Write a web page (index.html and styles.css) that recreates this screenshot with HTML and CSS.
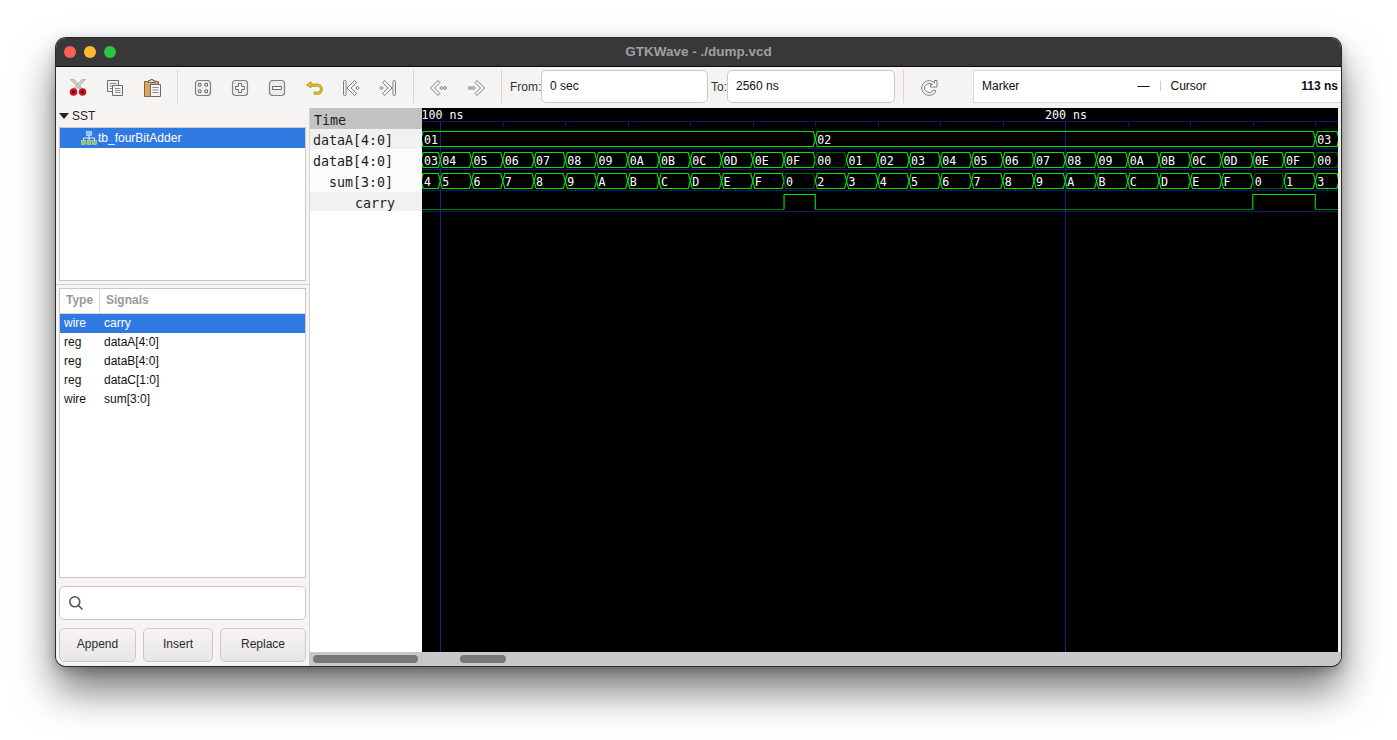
FILE: index.html
```html
<!DOCTYPE html>
<html lang="en">
<head>
<meta charset="utf-8">
<title>GTKWave - ./dump.vcd</title>
<link rel="stylesheet" href="styles.css">
</head>
<body>
<div class="window">
  <header class="titlebar">
    <div class="lights"><i class="light red"></i><i class="light yellow"></i><i class="light green"></i></div>
    <div class="title">GTKWave - ./dump.vcd</div>
  </header>
  <div class="toolbar">
    <button class="tb" aria-label="Cut"><svg viewBox="0 0 20 20" class="icon">
      <path class="blade" d="M2.5 1.5 L13.2 12.5 L15 11.3 L6 1.5 Z"/><path class="blade" d="M17.5 1.5 L6.8 12.5 L5 11.3 L14 1.5 Z"/>
      <circle class="scis" cx="5.5" cy="14" r="2.6"/><circle class="scis" cx="14.5" cy="14" r="2.6"/>
    </svg></button>
    <button class="tb" aria-label="Copy"><svg viewBox="0 0 20 20" class="icon">
      <path class="doc" d="M2.5 2.5 H13.5 V13.5 H2.5 Z"/><path class="docline" d="M4.5 5.5 H11.5 M4.5 8 H11.5 M4.5 10.5 H8"/>
      <path class="doc" d="M7.5 7.5 H17.5 V17.5 H7.5 Z"/><path class="docline" d="M10 10.5 H15.5 M10 12.5 H15.5 M10 14.5 H15.5"/>
    </svg></button>
    <button class="tb" aria-label="Paste"><svg viewBox="0 0 20 20" class="icon">
      <path class="board" d="M2.5 3.5 H16.5 V18.5 H2.5 Z"/><path class="clip" d="M6.5 4.5 V2.5 H8.5 V1.5 H11 V2.5 H13 V4.5 Z"/>
      <path class="doc" d="M8.5 6.5 H18.5 V18.5 H8.5 Z"/><path class="docline" d="M10.5 9.5 H16.5 M10.5 12 H16.5 M10.5 14.5 H16.5"/>
    </svg></button>
    <span class="sep"></span>
    <button class="tb" aria-label="Zoom fit"><svg viewBox="0 0 20 20" class="icon">
      <rect class="key" x="2.5" y="2.5" width="15" height="15" rx="3"/>
      <path class="mark" d="M8 8 H5.5 V5.5 H8 Z M12 8 H14.5 V5.5 H12 Z M8 12 H5.5 V14.5 H8 Z M12 12 H14.5 V14.5 H12 Z"/>
    </svg></button>
    <button class="tb" aria-label="Zoom in"><svg viewBox="0 0 20 20" class="icon">
      <rect class="key" x="2.5" y="2.5" width="15" height="15" rx="3"/>
      <path class="mark" d="M8.5 5.5 H11.5 V8.5 H14.5 V11.5 H11.5 V14.5 H8.5 V11.5 H5.5 V8.5 H8.5 Z"/>
    </svg></button>
    <button class="tb" aria-label="Zoom out"><svg viewBox="0 0 20 20" class="icon">
      <rect class="key" x="2.5" y="2.5" width="15" height="15" rx="3"/>
      <path class="mark" d="M5.5 8.5 H14.5 V11.5 H5.5 Z"/>
    </svg></button>
    <button class="tb" aria-label="Undo"><svg viewBox="0 0 20 20" class="icon">
      <path class="undo" d="M7 3.5 L2.5 7 L7 10 V8.3 H13.5 C15.6 8.3 16.3 10 16.3 11.2 C16.3 13 15 14 13.5 14 H10 V16.3 H13.5 C16.8 16.3 18.4 14 18.4 11.2 C18.4 8.5 16.6 6 13.5 6 H7 Z"/>
    </svg></button>
    <button class="tb" aria-label="Go to start"><svg viewBox="0 0 20 20" class="icon">
      <rect class="key2" x="2.5" y="2.5" width="2.5" height="15" rx="1"/>
      <path class="key2" d="M13.5 2.5 L15.5 4.5 L10 10 L15.5 15.5 L13.5 17.5 L6 10 Z"/>
      <circle class="key2" cx="16.5" cy="10" r="1.4"/>
    </svg></button>
    <button class="tb" aria-label="Go to end"><svg viewBox="0 0 20 20" class="icon">
      <rect class="key2" x="15" y="2.5" width="2.5" height="15" rx="1"/>
      <path class="key2" d="M6.5 2.5 L4.5 4.5 L10 10 L4.5 15.5 L6.5 17.5 L14 10 Z"/>
      <circle class="key2" cx="3.5" cy="10" r="1.4"/>
    </svg></button>
    <span class="sep"></span>
    <button class="tb" aria-label="Page left"><svg viewBox="0 0 20 20" class="icon">
      <path class="key2" d="M9 2.5 L11 4.5 L5.5 10 L11 15.5 L9 17.5 L1.5 10 Z"/>
      <circle class="key2" cx="12.5" cy="10" r="1.4"/><circle class="key2" cx="16" cy="10" r="1.4"/>
    </svg></button>
    <button class="tb" aria-label="Page right"><svg viewBox="0 0 20 20" class="icon">
      <path class="key2" d="M11 2.5 L9 4.5 L14.5 10 L9 15.5 L11 17.5 L18.5 10 Z"/>
      <circle class="key2" cx="7.5" cy="10" r="1.4"/><circle class="key2" cx="4" cy="10" r="1.4"/>
    </svg></button>
    <span class="sep"></span>
    <label class="from-label">From:</label>
    <div class="entry from">0 sec</div>
    <label class="to-label">To:</label>
    <div class="entry">2560 ns</div>
    <span class="sep sep-wide"></span>
    <button class="tb" aria-label="Reload"><svg viewBox="0 0 20 20" class="icon">
      <path class="key2" d="M15.5 5.2 V2.5 H18 V9 H11.5 V6.5 H13.6 C12.6 5.8 11.5 5.5 10.3 5.5 C7.6 5.5 5.5 7.5 5.5 10 C5.5 12.6 7.6 14.5 10.3 14.5 C12.2 14.5 13.8 13.5 14.6 12 L17 13 C15.8 15.6 13.3 17.3 10.3 17.3 C6.2 17.3 2.8 14.1 2.8 10 C2.8 5.9 6.2 2.7 10.3 2.7 C12.3 2.7 14.1 3.6 15.5 5.2 Z"/>
    </svg></button>
    <div class="readout">
      <div class="read-part"><span>Marker</span><b class="plain">&#8212;</b></div>
      <span class="read-sep"></span>
      <div class="read-part"><span>Cursor</span><b>113 ns</b></div>
    </div>
  </div>
  <main class="main">
    <aside class="left">
      <div class="sst-head"><i class="tri"></i>SST</div>
      <div class="box tree">
        <div class="tree-row">
          <svg viewBox="0 0 16 14" class="hier">
            <rect class="hb" x="5.5" y="0.5" width="5" height="4"/>
            <path class="hl" d="M8 4.5 V7 M2.5 9.5 V7 H13.5 V9.5 M8 7 V9.5"/>
            <rect class="hg" x="0.5" y="9.5" width="4" height="4"/><rect class="hg" x="6" y="9.5" width="4" height="4"/><rect class="hg" x="11.5" y="9.5" width="4" height="4"/>
          </svg>
          <span>tb_fourBitAdder</span>
        </div>
      </div>
      <div class="divider"></div>
      <div class="box signals">
        <div class="sig-head"><span class="c-type">Type</span><span class="c-name">Signals</span></div>
        <div class="sig-row on"><span class="c-t">wire</span><span>carry</span></div>
        <div class="sig-row"><span class="c-t">reg</span><span>dataA[4:0]</span></div>
        <div class="sig-row"><span class="c-t">reg</span><span>dataB[4:0]</span></div>
        <div class="sig-row"><span class="c-t">reg</span><span>dataC[1:0]</span></div>
        <div class="sig-row"><span class="c-t">wire</span><span>sum[3:0]</span></div>
      </div>
      <div class="search">
        <svg viewBox="0 0 16 16" class="glass"><circle cx="6.8" cy="6.8" r="5"/><path d="M10.5 10.5 L14.5 14.5"/></svg>
      </div>
      <div class="actions">
        <button class="act a1">Append</button>
        <button class="act a2">Insert</button>
        <button class="act a3">Replace</button>
      </div>
    </aside>
    <section class="right">
      <div class="panes">
        <div class="names">
          <div class="time">Time</div>
          <div class="nm tint">dataA[4:0]</div>
          <div class="nm">dataB[4:0]</div>
          <div class="nm">sum[3:0]</div>
          <div class="nm tint carry">carry</div>
        </div>
        <svg id="wave" class="wave" viewBox="422 108 916 544" width="916" height="544"></svg>
        <div class="strip"></div>
      </div>
      <div class="scrolls">
        <div class="sb sb1"><i class="thumb t1"></i></div>
        <div class="sb sb2"><i class="thumb t2"></i></div>
      </div>
    </section>
  </main>
</div>
<script src="waves.js"></script>
</body>
</html>
```
FILE: styles.css
```css
* { box-sizing: border-box; }
html, body { margin: 0; height: 100%; }
body {
  background: #fff;
  padding: 38px 56px 75px;
  font-family: "Liberation Sans", Arial, sans-serif;
  font-size: 12px;
  color: #1c1c1c;
  overflow: hidden;
}
.window {
  width: 1285px;
  height: 627.5px;
  border-radius: 10px;
  overflow: hidden;
  display: flex;
  flex-direction: column;
  background: #f5f4f2;
  box-shadow: 0 0 0 1px #2a2a2a, 0 24px 42px rgba(0,0,0,.55), 0 4px 12px rgba(0,0,0,.25);
}
.titlebar {
  flex: none;
  height: 29px;
  background: #38383b;
  border-bottom: 1px solid #0c0c0c;
  display: flex;
  align-items: center;
  position: relative;
  padding-left: 8px;
}
.lights { display: flex; gap: 8px; }
.light { width: 12px; height: 12px; border-radius: 50%; display: block; }
.red { background: #fe5f57; }
.yellow { background: #febb2e; }
.green { background: #28c840; }
.title {
  position: absolute;
  left: 0; right: 0; top: 6px;
  text-align: center;
  color: #a0a0a0;
  font-weight: bold;
  font-size: 13.5px;
  line-height: 16px;
}
.toolbar {
  flex: none;
  height: 41px;
  padding: 0 0 2px 3.5px;
  display: flex;
  align-items: center;
  background: #f5f4f2;
}
.tb {
  width: 37px;
  height: 33px;
  padding: 2px 0 0;
  border: 0;
  background: none;
  display: flex;
  align-items: center;
  justify-content: center;
  flex: none;
}
.icon { width: 20px; height: 20px; display: block; }
.sep { flex: none; width: 1px; height: 33px; background: #dbd8d4; margin: 0 6.5px; }
.sep-wide { margin-left: 8px; }
.from-label { margin-left: 1.5px; color: #333; width: 31px; flex: none; }
.to-label { margin-left: 3px; color: #333; width: 16px; flex: none; }
.entry {
  flex: none;
  width: 168px;
  height: 33px;
  background: #fff;
  border: 1px solid #cdc8c2;
  border-radius: 5px;
  padding-left: 8px;
  line-height: 30px;
  color: #111;
}
.from { width: 167px; }
.readout {
  margin-left: 25.5px;
  flex: 1;
  min-width: 0;
  height: 33px;
  background: #fff;
  border: 1px solid #dcd9d5;
  border-right: 0;
  padding: 0 3px 1px 8px;
  display: flex;
  align-items: center;
  gap: 10px;
}
.read-part { flex: 1; display: flex; justify-content: space-between; color: #111; }
.read-part .plain { font-weight: normal; }
.read-sep { width: 1px; height: 10px; background: #ccc; flex: none; }

.blade { fill: #d2d2d2; stroke: #8d8d8d; stroke-width: .6; }
.scis { fill: #3a0508; stroke: #d01020; stroke-width: 2.4; }
.doc { fill: #f6f6f4; stroke: #6b6b6b; stroke-width: 1; }
.docline { fill: none; stroke: #8a8a8a; stroke-width: 1; }
.board { fill: #d8a45f; stroke: #8a6434; stroke-width: 1; }
.clip { fill: #ddd; stroke: #666; stroke-width: 1; }
.key { fill: #ededeb; stroke: #808080; stroke-width: 1.2; }
.mark { fill: #fff; stroke: #6a6a6a; stroke-width: 1; }
.key2 { fill: #f7f7f6; stroke: #7d7d7d; stroke-width: 1; }
.undo { fill: #e6c227; stroke: #a3840e; stroke-width: .7; }

.main { flex: 1; min-height: 0; display: flex; }
.left {
  flex: none;
  width: 253px;
  padding: 0 3px;
  display: flex;
  flex-direction: column;
  background: #f5f4f2;
}
.sst-head { height: 19px; padding-bottom: 4px; display: flex; align-items: center; color: #222; flex: none; }
.tri {
  width: 0; height: 0;
  border-left: 5px solid transparent;
  border-right: 5px solid transparent;
  border-top: 6px solid #222;
  margin-right: 3px;
  margin-top: 1px;
}
.box { background: #fff; border: 1px solid #cdc8c2; flex: none; }
.tree { height: 154px; }
.tree-row {
  height: 20px;
  background: #2f7ae0;
  color: #fff;
  display: flex;
  align-items: center;
  padding-left: 21px;
  gap: 1px;
}
.hier { width: 16px; height: 14px; flex: none; }
.hb { fill: #9cc4f2; stroke: #dcecff; stroke-width: .6; }
.hg { fill: #8cc46a; stroke: #b9e09f; stroke-width: .6; }
.hl { fill: none; stroke: #e6eef7; stroke-width: 1; }
.divider { height: 1px; margin: 3px -3px 3px; background: #d5d1cc; flex: none; }
.signals { height: 290px; }
.sig-head {
  height: 25px;
  display: flex;
  align-items: center;
  border-bottom: 1px solid #dcd9d5;
  color: #9a9a9a;
  font-weight: bold;
  padding-bottom: 2px;
}
.c-type { width: 40px; padding-left: 6px; height: 25px; margin-bottom: -2px; line-height: 22px; border-right: 1px solid #dcd9d5; flex: none; }
.c-name { padding-left: 6px; }
.sig-row { height: 19px; padding-bottom: 2px; display: flex; align-items: center; color: #111; }
.sig-row.on { background: #2f7ae0; color: #fff; }
.c-t { width: 44px; padding-left: 4px; flex: none; }
.search {
  flex: none;
  margin-top: 8px;
  height: 34px;
  background: #fff;
  border: 1px solid #cdc8c2;
  border-radius: 5px;
  display: flex;
  align-items: center;
  padding-left: 8px;
}
.glass { width: 16px; height: 16px; fill: none; stroke: #555; stroke-width: 1.6; }
.actions { flex: none; margin-top: 8px; height: 34px; display: flex; gap: 7px; }
.act {
  height: 34px;
  padding: 0 0 2px;
  background: linear-gradient(#f6f5f3, #e8e6e3);
  border: 1px solid #cdc8c2;
  border-radius: 5px;
  font: 12px "Liberation Sans", Arial, sans-serif;
  color: #2a2a2a;
}
.a1 { width: 77px; }
.a2 { width: 70px; }
.a3 { width: 86px; }

.right { flex: 1; min-width: 0; display: flex; flex-direction: column; }
.panes { flex: 1; min-height: 0; display: flex; }
.names {
  flex: none;
  width: 113px;
  background: #fff;
  border-left: 1px solid #d8d5d1;
  font-family: "DejaVu Sans Mono", monospace;
  font-size: 13.3px;
  color: #222;
}
.time { height: 21px; background: #c3c3c3; padding-left: 4px; line-height: 25px; }
.nm { height: 21px; line-height: 24px; text-align: right; padding-right: 29px; border-bottom: 1px solid #fff; background: #fbfbfb; }
.tint { background: #f1f1f1; }
.carry { height: 20px; padding-right: 27px; }
.wave { flex: none; display: block; background: #000; }
.strip { flex: 1; background: #ededed; }
.scrolls { flex: none; height: 13.5px; display: flex; background: #c8c8c8; }
.sb { padding-top: 3px; }
.sb1 { width: 113px; border-right: 1px solid #bfbfbf; padding-left: 4px; }
.sb2 { flex: 1; padding-left: 38px; }
.thumb { display: block; height: 8px; border-radius: 4px; background: #747878; }
.t1 { width: 105px; }
.t2 { width: 46px; }

.w-axis { stroke: #15157a; stroke-width: 1; fill: none; shape-rendering: crispEdges; }
.w-major { stroke: #1c1c96; stroke-width: 1; shape-rendering: crispEdges; }
.w-sig { stroke: #00e400; stroke-width: 1.1; fill: none; }
.w-dim { stroke: #006400; stroke-width: 1.1; fill: none; }
.w-low { stroke: #008a00; stroke-width: 1; fill: none; }
.w-txt { fill: #fff; font-family: "DejaVu Sans Mono", monospace; font-size: 11.6px; }
```
FILE: waves.js
```js
(function () {
  var svg = document.getElementById('wave');
  var NS = 'http://www.w3.org/2000/svg';
  var T0 = 440.3, STEP = 31.25, END = 1338, START = 422, SLOPE = 2;

  function line(cls, d) {
    var p = document.createElementNS(NS, 'path');
    p.setAttribute('class', cls);
    p.setAttribute('d', d);
    svg.appendChild(p);
  }
  function text(x, y, s) {
    var t = document.createElementNS(NS, 'text');
    t.setAttribute('class', 'w-txt');
    t.setAttribute('x', x);
    t.setAttribute('y', y);
    t.textContent = s;
    svg.appendChild(t);
  }

  // Grid and time axis
  line('w-axis', 'M422 121.5H1338M422 148.5H1338M422 169.5H1338M422 190.5H1338M422 211.5H1338');
  for (var k = 1; k < 15; k++) {
    var tick = Math.round(T0 + 62.5 * k) + 0.5;
    line('w-axis', 'M' + tick + ' 121V127');
  }
  line('w-major', 'M440.5 121V652M1065.5 121V652');
  text(421.5, 119, '100 ns');
  text(1045, 119, '200 ns');

  // A bus: list of [startStep, label, dim]
  function bus(top, bot, cells) {
    for (var i = 0; i < cells.length; i++) {
      var c = cells[i];
      var a = i === 0 ? START - 1 : T0 + c[0] * STEP;
      var b = i + 1 < cells.length ? T0 + cells[i + 1][0] * STEP : END + 1;
      var d = 'M' + a + ' ' + (top + bot) / 2 + 'L' + (a + SLOPE) + ' ' + top + 'H' + (b - SLOPE) + 'L' + b + ' ' + (top + bot) / 2 +
              'L' + (b - SLOPE) + ' ' + bot + 'H' + (a + SLOPE) + 'Z';
      line(c[2] ? 'w-dim' : 'w-sig', d);
      text((i === 0 ? START : a) + 2, bot - 2.5, c[1]);
    }
  }

  var hex = '0123456789ABCDEF';
  var b2 = function (n) { return '0' + hex[n]; };

  bus(131.5, 146.5, [[-1, '01'], [12, '02'], [28, '03']]);

  var b = [[-1, '03']], s = [[-1, '4']], i;
  for (i = 0; i < 12; i++) {
    b.push([i, b2(i + 4)]);
    s.push([i, hex[(i + 5) % 16], i === 11]);
  }
  for (i = 0; i < 16; i++) {
    b.push([12 + i, b2(i), i === 0]);
    s.push([12 + i, hex[(i + 2) % 16], i === 14]);
  }
  b.push([28, '00', true]);
  s.push([28, '3']);
  bus(152.5, 167.5, b);
  bus(173.5, 188.5, s);

  // Carry
  var x1 = T0 + 11 * STEP, x2 = T0 + 12 * STEP, x3 = T0 + 26 * STEP, x4 = T0 + 28 * STEP;
  line('w-low', 'M422 209.5H' + x1 + 'M' + x2 + ' 209.5H' + x3 + 'M' + x4 + ' 209.5H1338');
  line('w-sig', 'M' + x1 + ' 209.5V194.5H' + x2 + 'V209.5M' + x3 + ' 209.5V194.5H' + x4 + 'V209.5');
})();
```
